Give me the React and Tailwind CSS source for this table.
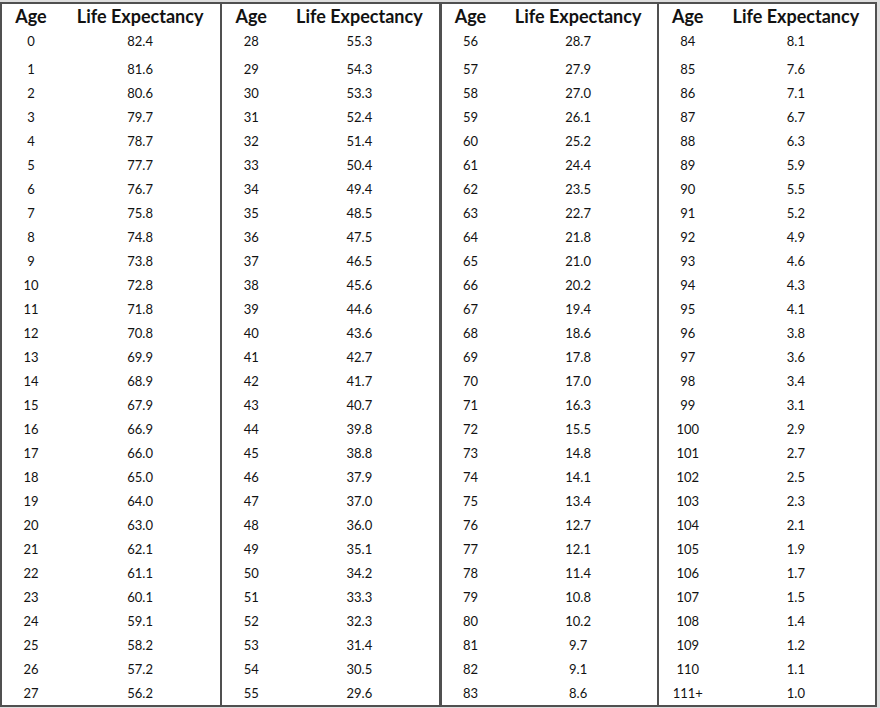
import React from "react";

const groups = [
  { start: 0, vals: "82.4,81.6,80.6,79.7,78.7,77.7,76.7,75.8,74.8,73.8,72.8,71.8,70.8,69.9,68.9,67.9,66.9,66.0,65.0,64.0,63.0,62.1,61.1,60.1,59.1,58.2,57.2,56.2" },
  { start: 28, vals: "55.3,54.3,53.3,52.4,51.4,50.4,49.4,48.5,47.5,46.5,45.6,44.6,43.6,42.7,41.7,40.7,39.8,38.8,37.9,37.0,36.0,35.1,34.2,33.3,32.3,31.4,30.5,29.6" },
  { start: 56, vals: "28.7,27.9,27.0,26.1,25.2,24.4,23.5,22.7,21.8,21.0,20.2,19.4,18.6,17.8,17.0,16.3,15.5,14.8,14.1,13.4,12.7,12.1,11.4,10.8,10.2,9.7,9.1,8.6" },
  { start: 84, vals: "8.1,7.6,7.1,6.7,6.3,5.9,5.5,5.2,4.9,4.6,4.3,4.1,3.8,3.6,3.4,3.1,2.9,2.7,2.5,2.3,2.1,1.9,1.7,1.5,1.4,1.2,1.1,1.0" },
];

function Group({ g, cls }) {
  const vals = g.vals.split(",");
  return (
    <div className={"flex flex-col " + cls}>
      <div className="flex h-[25px] items-center text-[18px] font-bold text-[#121212]">
        <div className="w-[58px] text-center">Age</div>
        <div className="flex-1 text-center">Life Expectancy</div>
      </div>
      {vals.map((v, i) => {
        const age = g.start + i;
        const label = age === 111 ? "111+" : String(age);
        return (
          <div
            key={i}
            className={"flex h-[24px] items-center pt-[2px] text-[13px] text-[#121212] " + (i === 1 ? "mt-[4px]" : "")}
          >
            <div className="w-[58px] text-center">{label}</div>
            <div className="flex-1 text-center">{v}</div>
          </div>
        );
      })}
    </div>
  );
}

export default function App() {
  return (
    <div className="h-[708px] w-[880px] bg-[#dedede] pt-[2px]" style={{ fontFamily: "Lato, 'Noto Sans', sans-serif" }}>
      <div className="grid w-[877px] grid-cols-4 border-2 border-[#505050] bg-white">
        <Group g={groups[0]} cls="" />
        <Group g={groups[1]} cls="border-l-2 border-[#505050]" />
        <Group g={groups[2]} cls="border-l-[3px] border-[#505050]" />
        <Group g={groups[3]} cls="border-l-2 border-[#505050]" />
      </div>
    </div>
  );
}
